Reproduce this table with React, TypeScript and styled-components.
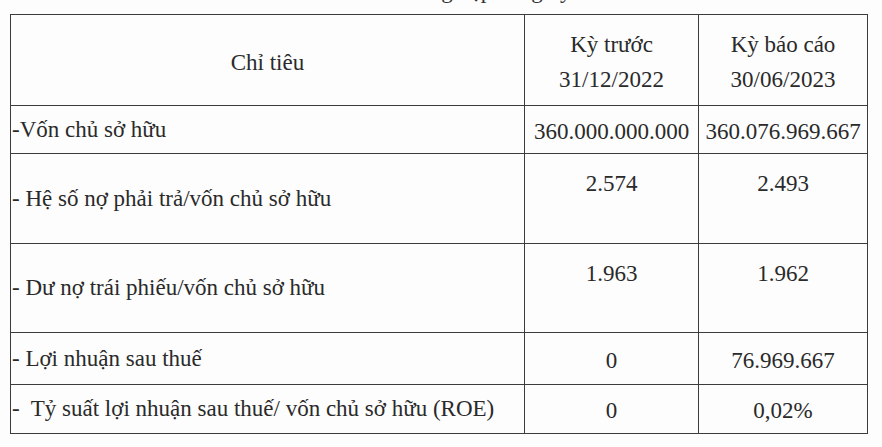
import React from "react";
import styled, { createGlobalStyle } from "styled-components";

const serif = `"Liberation Serif", "Times New Roman", serif`;

const GlobalStyle = createGlobalStyle`
  html, body {
    margin: 0;
    padding: 0;
    background: #fdfdfd;
  }
  body {
    font-family: ${serif};
    color: #2a2a2a;
  }
`;

interface RowData {
  label: string;
  prev: string;
  current: string;
  height: number;
  top?: boolean;
}

const rows: RowData[] = [
  { label: "-Vốn chủ sở hữu", prev: "360.000.000.000", current: "360.076.969.667", height: 48 },
  { label: "- Hệ số nợ phải trả/vốn chủ sở hữu", prev: "2.574", current: "2.493", height: 90, top: true },
  { label: "- Dư nợ trái phiếu/vốn chủ sở hữu", prev: "1.963", current: "1.962", height: 89, top: true },
  { label: "- Lợi nhuận sau thuế", prev: "0", current: "76.969.667", height: 52 },
  { label: "-  Tỷ suất lợi nhuận sau thuế/ vốn chủ sở hữu (ROE)", prev: "0", current: "0,02%", height: 49 },
];

const App = () => {
  return (
    <Page>
      <GlobalStyle />
      <Caption>
        <span>vốn của doanh nghiệp đăng ký.</span>
      </Caption>
      <Table>
        <colgroup>
          <col style={{ width: 514 }} />
          <col style={{ width: 174 }} />
          <col style={{ width: 169 }} />
        </colgroup>
        <thead>
          <tr>
            <HeadCell>Chỉ tiêu</HeadCell>
            <HeadCell>
              <Line>Kỳ trước</Line>
              <Line>31/12/2022</Line>
            </HeadCell>
            <HeadCell>
              <Line>Kỳ báo cáo</Line>
              <Line>30/06/2023</Line>
            </HeadCell>
          </tr>
        </thead>
        <tbody>
          {rows.map((r) => (
            <tr key={r.label} style={{ height: r.height }}>
              <LabelCell>{r.label}</LabelCell>
              <ValueCell $top={r.top}>{r.prev}</ValueCell>
              <ValueCell $top={r.top}>{r.current}</ValueCell>
            </tr>
          ))}
        </tbody>
      </Table>
    </Page>
  );
};

const Page = styled.div`
  width: 882px;
  height: 447px;
  overflow: hidden;
  padding-left: 10px;
  box-sizing: border-box;
`;

const Caption = styled.div`
  width: 857px;
  height: 14px;
  overflow: hidden;
  text-align: center;
  font-family: ${serif};
  font-size: 23px;
  color: #333;
  & > span {
    display: block;
    margin-top: -21px;
    line-height: 23px;
    padding-right: 10px;
  }
`;

const Table = styled.table`
  border-collapse: collapse;
  table-layout: fixed;
  width: 857px;
  font-family: ${serif};
  font-size: 23px;
  color: #2a2a2a;
  & td,
  & th {
    border: 1.5px solid #3c3c3c;
    padding: 0;
    font-weight: normal;
  }
  & thead tr {
    height: 91px;
  }
`;

const HeadCell = styled.th`
  text-align: center;
  vertical-align: middle;
  line-height: 35px;
  padding-top: 4px !important;
`;

const Line = styled.div`
  white-space: nowrap;
`;

const LabelCell = styled.td`
  text-align: left;
  vertical-align: middle;
  white-space: pre;
  padding-left: 1px !important;
  line-height: 28px;
`;

const ValueCell = styled.td<{ $top?: boolean }>`
  text-align: center;
  vertical-align: ${(p) => (p.$top ? "top" : "middle")};
  padding-top: ${(p) => (p.$top ? "16px" : "4px")} !important;
  line-height: 28px;
  white-space: nowrap;
`;

export default App;
